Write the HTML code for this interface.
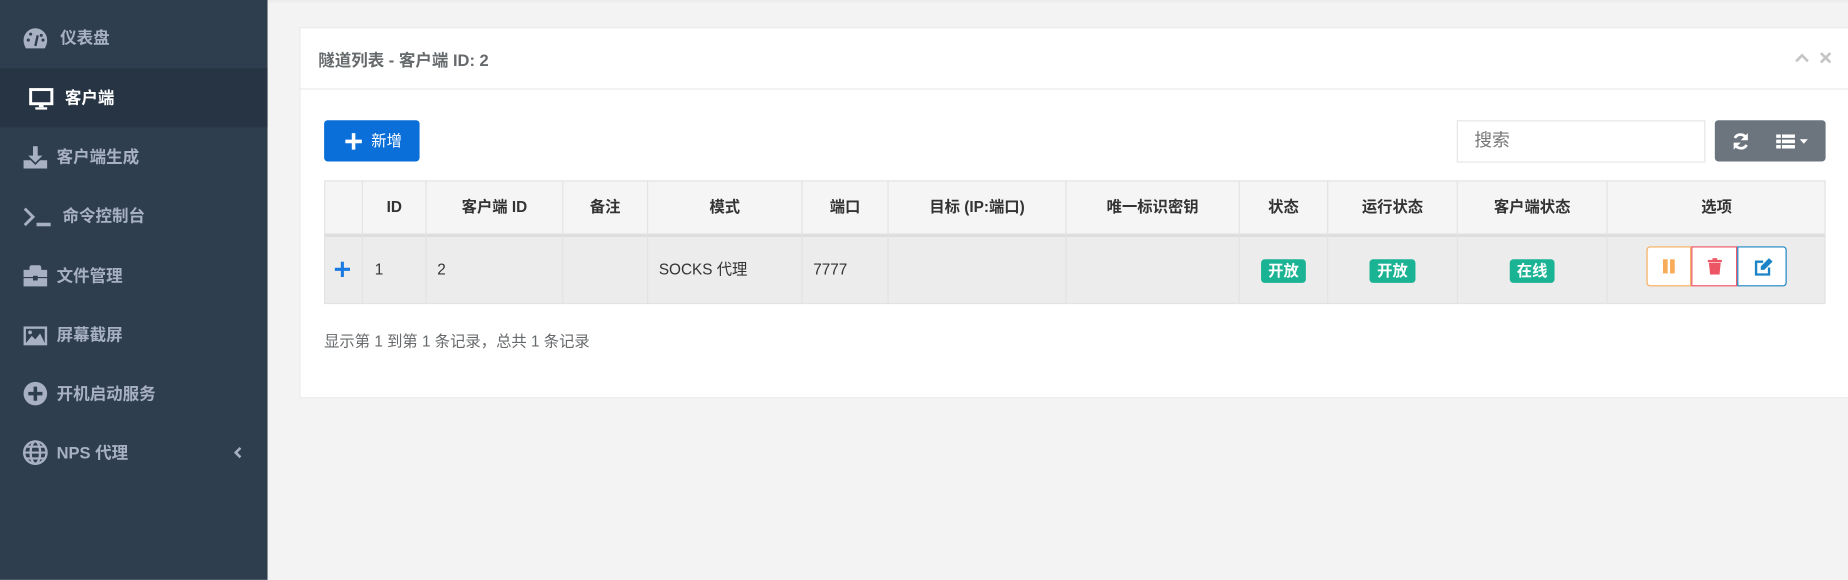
<!DOCTYPE html>
<html><head><meta charset="utf-8"><style>
html,body{margin:0;padding:0;width:1848px;height:580px;overflow:hidden;background:#f3f3f4}
#w{position:absolute;left:0;top:0;width:1568px;height:492px;transform:scale(1.17857);transform-origin:0 0;font-family:"Liberation Sans","Noto Sans CJK SC",sans-serif;font-size:13px;color:#676a6c}
.sb{position:absolute;left:0;top:0;width:227px;height:492px;background:#2f3e4e}
.it{position:absolute;left:0;width:227px;height:50px;line-height:50px;color:#a7b1c2;font-weight:bold;font-size:14px}
.it svg{position:absolute;left:19px;top:16px}
.it span{position:absolute;left:48px}
.act{background:#263444;color:#fff}
.abs{position:absolute}
.panel{position:absolute;left:254px;top:23px;width:1320px;height:313px;background:#fff;border:1px solid #e7eaec;border-right:none}
.th,.td{position:absolute;text-align:center;border-left:1px solid #e3e3e3;box-sizing:border-box}
.th{top:153px;height:46px;line-height:46px;font-weight:bold;color:#333}
.td{top:199px;height:59px;line-height:59px;color:#333}
.bd{display:inline-block;background:#1ab394;color:#fff;font-weight:bold;font-size:13px;line-height:20px;padding:0 6px;border-radius:3px;vertical-align:middle}
</style></head><body><div id="w">
<div style="position:absolute;left:227px;top:0;width:1341px;height:2px;background:#ececec"></div>
<div class="sb">
<div class="it" style="top:7px"><svg width="22" height="20" viewBox="0 0 22 20"><path d="M11 1A10 10 0 0 0 1 11c0 3 1 5 2 7h16c1-2 2-4 2-7A10 10 0 0 0 11 1z" fill="#a7b1c2"/><path d="M11 16l2-9" stroke="#2f3e4e" stroke-width="2"/><circle cx="5" cy="11" r="1.3" fill="#2f3e4e"/><circle cx="7" cy="6" r="1.3" fill="#2f3e4e"/><circle cx="16" cy="7" r="1.3" fill="#2f3e4e"/><circle cx="17.5" cy="11" r="1.3" fill="#2f3e4e"/></svg><span style="left:51px">仪表盘</span></div>
<div class="it act" style="top:58px"><svg width="22" height="20" viewBox="0 0 22 20" style="left:24px"><rect x="2" y="2" width="18" height="12" fill="none" stroke="#fff" stroke-width="2.5"/><rect x="9" y="14" width="4" height="3" fill="#fff"/><rect x="6" y="17" width="10" height="2" fill="#fff"/></svg><span style="left:55px">客户端</span></div>
<div class="it" style="top:108px"><svg width="22" height="20" viewBox="0 0 22 20"><path d="M9 0h4v8h4l-6 6-6-6h4z" fill="#a7b1c2"/><path d="M1 12h6l4 4 4-4h6v7H1z" fill="#a7b1c2"/></svg><span>客户端生成</span></div>
<div class="it" style="top:158px"><svg width="26" height="20" viewBox="0 0 26 20"><path d="M2 3l7 7-7 7" fill="none" stroke="#a7b1c2" stroke-width="2.5"/><rect x="12" y="15" width="12" height="3" fill="#a7b1c2"/></svg><span style="left:53px">命令控制台</span></div>
<div class="it" style="top:209px"><svg width="22" height="20" viewBox="0 0 22 20"><path d="M8 2h6v2h-6zM6 4V2a2 2 0 0 1 2-2h6a2 2 0 0 1 2 2v2h5v6H1V4z" fill="#a7b1c2"/><rect x="1" y="11" width="20" height="7" fill="#a7b1c2"/><rect x="9" y="9" width="4" height="4" fill="#2f3e4e"/></svg><span>文件管理</span></div>
<div class="it" style="top:259px"><svg width="22" height="20" viewBox="0 0 22 20"><rect x="1" y="2" width="20" height="16" fill="#a7b1c2"/><rect x="3" y="4" width="16" height="12" fill="#2f3e4e"/><path d="M3 16l5-6 3 3 4-5 4 8z" fill="#a7b1c2"/><circle cx="6.5" cy="7" r="1.6" fill="#a7b1c2"/></svg><span>屏幕截屏</span></div>
<div class="it" style="top:309px"><svg width="22" height="22" viewBox="0 0 22 22" style="top:14px"><circle cx="11" cy="11" r="10" fill="#a7b1c2"/><path d="M11 5v12M5 11h12" stroke="#2f3e4e" stroke-width="3"/></svg><span>开机启动服务</span></div>
<div class="it" style="top:359px"><svg width="22" height="22" viewBox="0 0 22 22" style="top:14px"><circle cx="11" cy="11" r="9.5" fill="none" stroke="#a7b1c2" stroke-width="2"/><ellipse cx="11" cy="11" rx="4" ry="9.5" fill="none" stroke="#a7b1c2" stroke-width="2"/><path d="M1 11h20M3 6h16M3 16h16" stroke="#a7b1c2" stroke-width="1.8"/></svg><span>NPS 代理</span><svg width="8" height="10" viewBox="0 0 8 10" style="left:198px;top:20px"><path d="M6 1L2 5l4 4" fill="none" stroke="#a7b1c2" stroke-width="2.2"/></svg></div>
</div>
<div class="panel"></div>
<div class="abs" style="left:254px;top:75px;width:1314px;height:1px;background:#e7eaec"></div>
<div class="abs" style="left:270px;top:41px;font-size:14px;font-weight:bold;color:#676a6c">隧道列表 - 客户端 ID: 2</div>
<svg class="abs" style="left:1523px;top:44px" width="12" height="10" viewBox="0 0 12 10"><path d="M1 8l5-5 5 5" fill="none" stroke="#c4c4c4" stroke-width="2.2"/></svg>
<svg class="abs" style="left:1544px;top:44px" width="10" height="10" viewBox="0 0 10 10"><path d="M1 1l8 8M9 1l-8 8" stroke="#c4c4c4" stroke-width="2.2"/></svg>
<div class="abs" style="left:275px;top:102px;width:81px;height:35px;background:#0b6fd9;border-radius:3px;color:#fff;line-height:35px"><svg class="abs" style="left:17px;top:10px" width="16" height="16" viewBox="0 0 16 16"><path d="M8 1v14M1 8h14" stroke="#fff" stroke-width="3"/></svg><span class="abs" style="left:40px">新增</span></div>
<div class="abs" style="left:1236px;top:102px;width:211px;height:36px;border:1px solid #e5e6e7;box-sizing:border-box;background:#fff;line-height:34px;padding-left:14px;font-size:15px;color:#777">搜索</div>
<div class="abs" style="left:1455px;top:102px;width:94px;height:35px;background:#6c757d;border-radius:3px"><svg class="abs" style="left:14px;top:10px" width="16" height="16" viewBox="0 0 16 16"><path d="M13 6A5.5 5.5 0 0 0 3 5M3 10a5.5 5.5 0 0 0 10 1" fill="none" stroke="#fff" stroke-width="2.3"/><path d="M14 1v6H8zM2 15V9h6z" fill="#fff"/></svg><svg class="abs" style="left:52px;top:12px" width="16" height="12" viewBox="0 0 16 12"><path d="M0 0h4v3H0zM5 0h11v3H5zM0 4.5h4v3H0zM5 4.5h11v3H5zM0 9h4v3H0zM5 9h11v3H5z" fill="#fff"/></svg><svg class="abs" style="left:72px;top:16px" width="8" height="5"><path d="M0 0h7L3.5 4z" fill="#fff"/></svg></div>
<div class="abs" style="left:275px;top:153px;width:1274px;height:46px;background:#f5f5f5;border:1px solid #e3e3e3;box-sizing:border-box"></div>
<div class="abs" style="left:275px;top:199px;width:1274px;height:59px;background:#ececec;border:1px solid #e3e3e3;border-top:2px solid #ddd;box-sizing:border-box"></div>
<div class="th" style="left:307px;width:54px">ID</div>
<div class="th" style="left:361px;width:116px">客户端 ID</div>
<div class="th" style="left:477px;width:72px">备注</div>
<div class="th" style="left:549px;width:131px">模式</div>
<div class="th" style="left:680px;width:73px">端口</div>
<div class="th" style="left:753px;width:151px">目标 (IP:端口)</div>
<div class="th" style="left:904px;width:147px">唯一标识密钥</div>
<div class="th" style="left:1051px;width:75px">状态</div>
<div class="th" style="left:1126px;width:110px">运行状态</div>
<div class="th" style="left:1236px;width:127px">客户端状态</div>
<div class="th" style="left:1363px;width:186px">选项</div>
<svg class="abs" style="left:284px;top:222px" width="13" height="13" viewBox="0 0 13 13"><path d="M6.5 0v13M0 6.5h13" stroke="#1a7ae0" stroke-width="2.6"/></svg>
<div class="td" style="left:307px;width:54px;text-align:left;padding-left:10px">1</div>
<div class="td" style="left:361px;width:116px;text-align:left;padding-left:9px">2</div>
<div class="td" style="left:477px;width:72px"></div>
<div class="td" style="left:549px;width:131px;text-align:left;padding-left:9px">SOCKS 代理</div>
<div class="td" style="left:680px;width:73px;text-align:left;padding-left:9px">7777</div>
<div class="td" style="left:753px;width:151px"></div>
<div class="td" style="left:904px;width:147px"></div>
<div class="td" style="left:1051px;width:75px"><span class="bd">开放</span></div>
<div class="td" style="left:1126px;width:110px"><span class="bd">开放</span></div>
<div class="td" style="left:1236px;width:127px"><span class="bd">在线</span></div>
<div class="td" style="left:1363px;width:186px"></div>
<div class="abs" style="left:1397px;top:209px;width:38px;height:34px;border:1px solid #f8ac59;box-sizing:border-box;border-radius:3px 0 0 3px;background:#fff"><div class="abs" style="left:13px;top:10px;width:4px;height:12px;background:#f8ac59"></div><div class="abs" style="left:19px;top:10px;width:4px;height:12px;background:#f8ac59"></div></div>
<div class="abs" style="left:1435px;top:209px;width:39px;height:34px;border:1px solid #ed5565;box-sizing:border-box;background:#fff"><svg class="abs" style="left:13px;top:9px" width="12" height="14" viewBox="0 0 12 14"><path d="M0 1.5h12v2H0zM4 0h4v2H4zM1 4h10l-1 10H2z" fill="#ed5565"/></svg></div>
<div class="abs" style="left:1474px;top:209px;width:42px;height:34px;border:1px solid #1c84c6;box-sizing:border-box;border-radius:0 3px 3px 0;background:#fff"><svg class="abs" style="left:13px;top:9px" width="16" height="15" viewBox="0 0 16 15"><path d="M8 3H2v11h11V8" fill="none" stroke="#1c84c6" stroke-width="2"/><path d="M13 0l3 3-7 7H6V7z" fill="#1c84c6"/></svg></div>
<div class="abs" style="left:275px;top:279px;color:#676a6c">显示第 1 到第 1 条记录，总共 1 条记录</div>
</div></body></html>
